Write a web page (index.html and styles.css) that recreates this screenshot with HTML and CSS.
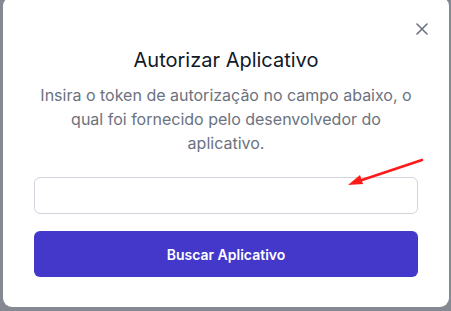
FILE: index.html
```html
<!DOCTYPE html>
<html lang="pt-BR">
<head>
<meta charset="utf-8">
<link rel="stylesheet" href="styles.css">
</head>
<body>
<div class="backdrop">
  <div class="panel">
    <button class="close" aria-label="Fechar">
      <svg width="12" height="12" viewBox="0 0 12 12"><path d="M1 1L11 11M11 1L1 11" stroke="#6b7280" stroke-width="1.6" stroke-linecap="round"/></svg>
    </button>
    <h2 class="title">Autorizar Aplicativo</h2>
    <p class="desc">Insira o token de autorização no campo abaixo, o qual foi fornecido pelo desenvolvedor do aplicativo.</p>
    <input class="field" type="text">
    <button class="submit">Buscar Aplicativo</button>
    <svg class="arrow" width="80" height="32" viewBox="0 0 80 32">
      <path d="M76 4L10 26" stroke="#ff1a1a" stroke-width="2.6" stroke-linecap="round"/>
      <path d="M2 29L14 19L17 28Z" fill="#ff1a1a"/>
    </svg>
  </div>
</div>
</body>
</html>
```

FILE: styles.css
```css
html, body {
  margin: 0;
  padding: 0;
  height: 100%;
}
body {
  background: #858991;
  font-family: Inter, "Noto Sans", sans-serif;
  overflow: hidden;
}
.backdrop {
  padding: 0 2px 0 3px;
}
.panel {
  position: relative;
  margin-top: -3px;
  background: #ffffff;
  border-radius: 9px;
  padding: 49px 31px 30px 31px;
  display: flex;
  flex-direction: column;
  align-items: stretch;
}
.close {
  position: absolute;
  top: 23px;
  right: 18px;
  width: 18px;
  height: 18px;
  padding: 0;
  border: none;
  background: none;
  display: flex;
  align-items: center;
  justify-content: center;
}
.title {
  margin: 0;
  font-size: 20px;
  line-height: 28px;
  font-weight: 400;
  color: #111827;
  text-align: center;
}
.desc {
  margin: 9px 0 0 0;
  font-size: 16px;
  line-height: 24px;
  color: #6b7280;
  text-align: center;
  padding: 0 2px;
}
.field {
  margin: 22px 0 0 0;
  height: 37px;
  box-sizing: border-box;
  border: 1px solid #d1d5db;
  border-radius: 6px;
  background: #fff;
  outline: none;
}
.submit {
  margin-top: 17px;
  height: 46px;
  border: none;
  border-radius: 6px;
  background: #4338ca;
  color: #ffffff;
  font-family: Inter, "Noto Sans", sans-serif;
  font-size: 14px;
  font-weight: 600;
}
.arrow {
  position: absolute;
  left: 343px;
  top: 159px;
}
```
